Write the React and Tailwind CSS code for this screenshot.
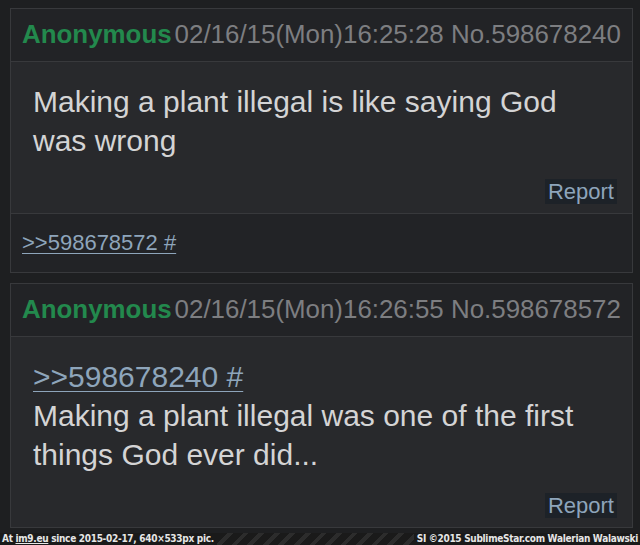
export default function App() {
  const sans = "font-['Liberation_Sans',Arial,sans-serif]";
  const Header = ({ date }) => (
    <div className="h-[53px] bg-[#222326] border-b border-[#38393c] flex items-center pl-[11px] text-[25.9px] leading-none whitespace-nowrap">
      <span className="font-bold text-[#23894d]">Anonymous</span>
      <span className="ml-[3px] text-[#7d7e81]">{date}</span>
    </div>
  );
  const Report = () => (
    <div className="flex justify-end pr-[15px]">
      <span className="bg-[#1d2228] px-[3px] text-[22px] leading-[25px] text-[#8ea5bb]">Report</span>
    </div>
  );
  return (
    <div className={`h-[545px] flex flex-col bg-[#1e1f21] ${sans}`}>
      <div className="flex-1 overflow-hidden pt-2 pl-[10px] pr-[7px]">
        <div className="border border-[#38393c] bg-[#28292c]">
          <Header date="02/16/15(Mon)16:25:28 No.598678240" />
          <div className="pt-[20px] pb-[9px]">
            <div className="pl-[22px] pr-[30px] text-[30px] leading-[39px] text-[#d4d4d5]">
              Making a plant illegal is like saying God was wrong
            </div>
            <div className="mt-[19px]">
              <Report />
            </div>
          </div>
          <div className="h-[59px] bg-[#222326] border-t border-[#38393c] flex items-center pl-[11px]">
            <span className="text-[22px] leading-none text-[#8ea5bb] underline underline-offset-[3px] decoration-1">&gt;&gt;598678572 #</span>
          </div>
        </div>
        <div className="mt-[10px] border border-[#38393c] bg-[#28292c]">
          <Header date="02/16/15(Mon)16:26:55 No.598678572" />
          <div className="pt-[20px] pb-[9px]">
            <div className="pl-[22px] pr-[30px] text-[30px] leading-[39px] text-[#d4d4d5]">
              <div>
                <span className="text-[#8ea5bb] underline underline-offset-[4px] decoration-1">&gt;&gt;598678240 #</span>
              </div>
              Making a plant illegal was one of the first things God ever did...
            </div>
            <div className="mt-[19px]">
              <Report />
            </div>
          </div>
        </div>
      </div>
      <div className="h-[12px] flex justify-between items-center bg-[repeating-linear-gradient(135deg,#1a1a1a_0px,#1a1a1a_7px,#2c2c2c_7px,#2c2c2c_11px)] font-['DejaVu_Sans_Condensed','DejaVu_Sans',sans-serif] font-bold text-[10px] leading-[12px] tracking-[-0.3px] text-[#e6e6e6] whitespace-nowrap">
        <span className="bg-[#1a1a1a] pl-[2px] pr-[3px]">
          At <span className="underline">im9.eu</span> since 2015-02-17, 640×533px pic.
        </span>
        <span className="bg-[#1a1a1a] pl-[3px] pr-[2px]">SI ©2015 SublimeStar.com Walerian Walawski</span>
      </div>
    </div>
  );
}
